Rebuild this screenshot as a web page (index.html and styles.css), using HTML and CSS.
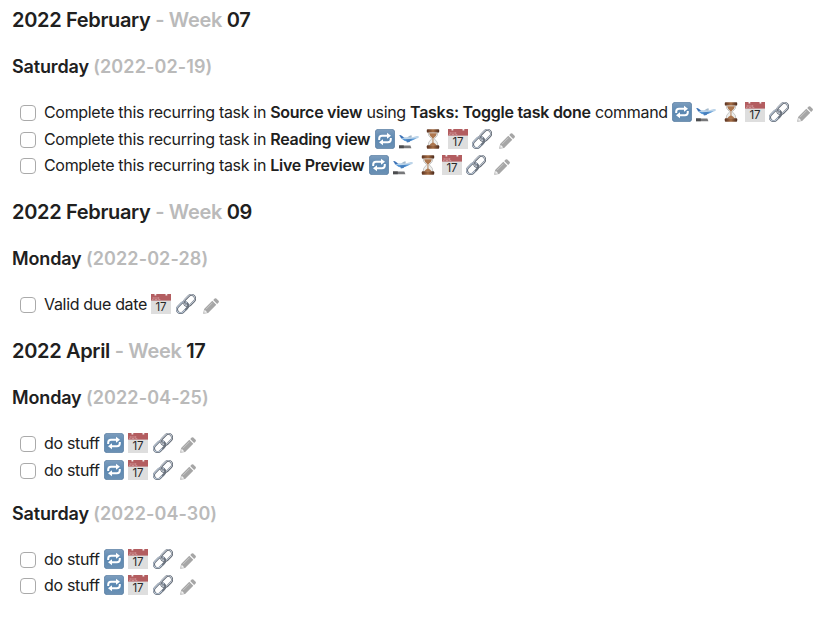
FILE: index.html
```html
<!DOCTYPE html>
<html lang="en">
<head>
<meta charset="utf-8">
<title>Tasks</title>
<link rel="stylesheet" href="styles.css">
</head>
<body>
<svg class="defs" aria-hidden="true">
  <defs>
    <linearGradient id="blue" x2="0" y2="1"><stop stop-color="#7d9dbd"/><stop offset=".5" stop-color="#5b88b2"/><stop offset="1" stop-color="#6c91b4"/></linearGradient>
    <linearGradient id="wood" x2="1" y2="0"><stop stop-color="#5a3220"/><stop offset=".5" stop-color="#a56c43"/><stop offset="1" stop-color="#4a291b"/></linearGradient>
    <symbol id="repeat" viewBox="0 0 20 20">
      <rect x=".4" y=".4" width="19.2" height="19.2" rx="2.6" fill="url(#blue)" stroke="#5a7fa3" stroke-width=".8"/>
      <path d="M4.2 11V9.8Q4.2 6.8 7 6.8h5.5M15.8 9v1.2q0 3-2.8 3H7.5" fill="none" stroke="#fff" stroke-width="2"/>
      <path d="M12 3.8l4 3-4 3zM8 10.2l-4 3 4 3z" fill="#fff"/>
    </symbol>
    <symbol id="plane" viewBox="0 0 20 20">
      <path d="M0 16.4h11.4l1 2.8H0z" fill="#77787a"/><path d="M0 16.4h4.8v2.8H0z" fill="#4b4c4e"/>
      <path d="M7.6 8.7l3.6-2.2 1.6.1-.3 2.9z" fill="#a4b9cb"/>
      <path d="M.2 6.3h1.6l2.5 1.8 8.1.5 5.4-1.6q2.2-.2 2.2.9-.3 1.2-2.2 1.7l-5.3 1.9q-4 1-7.1 0L2 9.4z" fill="#bcd4e9"/>
      <path d="M.2 6.1l1.7.1 3.2 2.4-2.6 1z" fill="#3b70b5"/>
      <path d="M2.6 9.6l5.2.6 9.8-1-5.1 2.6q-4 1-7.1 0z" fill="#5597d6"/>
      <path d="M7 10.4l6-.4-2.5 3-2.6.6z" fill="#477fbd"/>
    </symbol>
    <symbol id="hourglass" viewBox="0 0 20 20">
      <path d="M5 2.5h10q.3 4.6-3.7 7.3 4 2.9 3.7 7.7H5q-.3-4.8 3.7-7.7Q4.7 7.1 5 2.5z" fill="#eceeed" stroke="#b4b3b0" stroke-width=".7"/>
      <path d="M6.1 4.2h7.8q-.6 3.2-3.5 5v4.2q2 .8 3.4 3.2H6.1q1.4-2.4 3.4-3.2V9.2Q6.7 7.4 6.1 4.2z" fill="#ad764d"/>
      <rect x="3.8" y=".2" width="12.4" height="3.4" rx=".9" fill="url(#wood)"/>
      <rect x="3.8" y="16.3" width="12.4" height="3.4" rx=".9" fill="url(#wood)"/>
    </symbol>
    <symbol id="calendar" viewBox="0 0 20 20">
      <path d="M0 0h20v20H0z" fill="#dedede"/><path d="M0 0h20v6.6H0z" fill="#b35d60"/>
      <path d="M2.2 3v2.6H1M4 3v2.6h2V3M7.7 3v2.6h1.6" fill="none" stroke="#d9a5a6" stroke-width=".7"/>
      <path d="M3.5 0h1.8v1.5H3.5zM14.5 0h1.8v1.5h-1.8z" fill="#f4eeee"/>
      <text x="10" y="17.2" text-anchor="middle" class="date">17</text>
    </symbol>
    <symbol id="link" viewBox="0 0 20 20">
      <g transform="rotate(-45 10 10)" fill="none">
        <rect x="-1.3" y="6.3" width="12.6" height="7.4" rx="3.7" stroke="#626a75" stroke-width="2.2"/>
        <rect x="-1.3" y="6" width="12.6" height="7.4" rx="3.7" stroke="#c0cddd" stroke-width="1"/>
        <rect x="8.7" y="6.3" width="12.6" height="7.4" rx="3.7" stroke="#5c626c" stroke-width="2.2"/>
        <rect x="8.7" y="6" width="12.6" height="7.4" rx="3.7" stroke="#c7cfd9" stroke-width="1"/>
        <path d="M5.5 13.7h2.1q3.7 0 3.7-3.7" stroke="#6b737e" stroke-width="1.8"/>
      </g>
    </symbol>
    <symbol id="pencil" viewBox="0 0 16 16">
      <path d="M.2 15.8l.9-4.8 8.2-8.2 4 4-8.2 8.1zM10.2 2l1.5-1.5q.8-.7 1.6 0l2.3 2.3q.7.8 0 1.6L14.1 6z" fill="#a6a6a6"/>
      <path d="M1.7 12l2.4 2.4-2.4.4-.5-.6zM3 11.2L9.5 4.7" fill="#fff" stroke="#ddd" stroke-width=".6"/>
    </symbol>
  </defs>
</svg>
<main id="tasks"></main>
<script src="tasks.js"></script>
</body>
</html>
```
FILE: styles.css
```css
body { margin: 0; background: #fff; color: #202020; font: 16px/26.5px Inter, sans-serif; }
.defs { position: absolute; width: 0; height: 0; }
main { padding: 6.5px 12px 0; }
h4, h5 { margin: 0 0 19.5px; line-height: 27px; font-weight: 600; white-space: nowrap; }
h4 { font-size: 20px; letter-spacing: -.33px; }
h5 { font-size: 18px; letter-spacing: -.15px; }
.muted { color: #bababa; }
h5 .muted { letter-spacing: .1px; }
ul { list-style: none; margin: 0 0 19.5px; padding: 0 0 0 8px; }
ul + h5 { margin-top: -3.3px; }
li { display: flex; align-items: center; height: 26.5px; white-space: pre; }
.box { appearance: none; box-sizing: border-box; flex: none; width: 16px; height: 16px; margin: 1px 8px 0 0; border: 1px solid #aaa; border-radius: 4px; background: #fff; }
.label { letter-spacing: -.32px; margin-top: -1px; }
.label b { font-weight: 600; letter-spacing: -.27px; }
.icons { display: flex; gap: 4.3px; margin: -1px 0 0 4.4px; align-items: center; }
.icon { width: 20px; height: 20px; display: block; }
.icon.pencil { width: 16px; height: 16px; margin: 4px 0 0 3.2px; }
.date { font: 400 11.5px Inter, sans-serif; fill: #282828; letter-spacing: -.1px; }
```
FILE: tasks.js
```js
const recurring = ['repeat', 'calendar', 'link', 'pencil'];
const full = ['repeat', 'plane', 'hourglass', 'calendar', 'link', 'pencil'];
const weeks = [
  ['2022 February', '07', [['Saturday', '2022-02-19', [
    ['Complete this recurring task in <b>Source view</b> using <b>Tasks: Toggle task done</b> command', full],
    ['Complete this recurring task in <b>Reading view</b>', full],
    ['Complete this recurring task in <b>Live Preview</b>', full]]]]],
  ['2022 February', '09', [['Monday', '2022-02-28', [['Valid due date', ['calendar', 'link', 'pencil']]]]]],
  ['2022 April', '17', [
    ['Monday', '2022-04-25', [['do stuff', recurring], ['do stuff', recurring]]],
    ['Saturday', '2022-04-30', [['do stuff', recurring], ['do stuff', recurring]]]]]
];
const icon = n => `<svg class="icon ${n}"><use href="#${n}"/></svg>`;
const task = ([text, icons]) => `<li><input class="box" type="checkbox"><span class="label">${text}</span><span class="icons">${icons.map(icon).join('')}</span></li>`;
const day = ([name, date, items]) => `<h5>${name} <span class="muted">(${date})</span></h5><ul>${items.map(task).join('')}</ul>`;
document.getElementById('tasks').innerHTML = weeks.map(([month, week, days]) =>
  `<h4>${month} <span class="muted">- Week</span> ${week}</h4>${days.map(day).join('')}`).join('');
```
